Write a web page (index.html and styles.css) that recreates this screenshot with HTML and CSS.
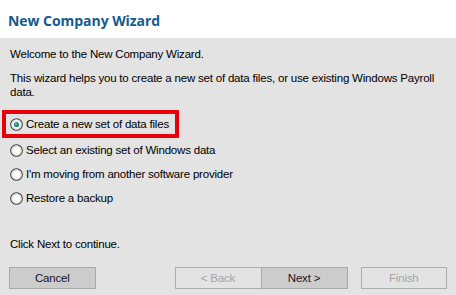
FILE: index.html
```html
<!DOCTYPE html>
<html>
<head>
<meta charset="utf-8">
<link rel="stylesheet" href="styles.css">
</head>
<body>
<div class="wizard">
  <header class="header">
    <h1 class="title">New Company Wizard</h1>
  </header>
  <main class="content">
    <p class="text welcome">Welcome to the New Company Wizard.</p>
    <p class="text intro">This wizard helps you to create a new set of data files, or use existing Windows Payroll data.</p>
    <div class="options">
      <label class="option highlighted">
        <svg class="radio" width="13" height="13" viewBox="0 0 13 13"><circle cx="6.5" cy="6.5" r="5.8" fill="#f4f4f4" stroke="#3c3c3c" stroke-width="1.1"/><circle cx="6.5" cy="6.5" r="4.6" fill="#ffffff" stroke="#cfcfcf" stroke-width="0.8"/><circle cx="6.5" cy="6.5" r="2.6" fill="#1f8a6e"/><circle cx="6" cy="6" r="1" fill="#7fd0b4"/></svg>
        <span>Create a new set of data files</span>
      </label>
      <label class="option">
        <svg class="radio" width="13" height="13" viewBox="0 0 13 13"><circle cx="6.5" cy="6.5" r="5.8" fill="#f4f4f4" stroke="#3c3c3c" stroke-width="1.1"/><circle cx="6.5" cy="6.5" r="4.6" fill="#ffffff" stroke="#cfcfcf" stroke-width="0.8"/></svg>
        <span>Select an existing set of Windows data</span>
      </label>
      <label class="option">
        <svg class="radio" width="13" height="13" viewBox="0 0 13 13"><circle cx="6.5" cy="6.5" r="5.8" fill="#f4f4f4" stroke="#3c3c3c" stroke-width="1.1"/><circle cx="6.5" cy="6.5" r="4.6" fill="#ffffff" stroke="#cfcfcf" stroke-width="0.8"/></svg>
        <span>I'm moving from another software provider</span>
      </label>
      <label class="option">
        <svg class="radio" width="13" height="13" viewBox="0 0 13 13"><circle cx="6.5" cy="6.5" r="5.8" fill="#f4f4f4" stroke="#3c3c3c" stroke-width="1.1"/><circle cx="6.5" cy="6.5" r="4.6" fill="#ffffff" stroke="#cfcfcf" stroke-width="0.8"/></svg>
        <span>Restore a backup</span>
      </label>
    </div>
    <p class="text continue">Click Next to continue.</p>
  </main>
  <footer class="buttons">
    <button class="btn btn-active">Cancel</button>
    <div class="nav">
      <button class="btn btn-disabled">&lt; Back</button>
      <button class="btn btn-active btn-next">Next &gt;</button>
    </div>
    <button class="btn btn-disabled">Finish</button>
  </footer>
</div>
</body>
</html>
```
FILE: styles.css
```css
* { box-sizing: border-box; }
html, body {
  margin: 0;
  padding: 0;
}
body {
  width: 456px;
  height: 295px;
  background: #e3e3e3;
  font-family: "Liberation Sans", Arial, sans-serif;
  overflow: hidden;
}
.wizard {
  display: flex;
  flex-direction: column;
  height: 295px;
}
.header {
  height: 38px;
  background: #ffffff;
  padding: 11px 0 0 8px;
}
.title {
  margin: 0;
  font-family: "Open Sans", "Noto Sans", sans-serif;
  font-weight: 700;
  font-size: 14px;
  line-height: 20px;
  color: #155b8e;
  letter-spacing: -0.05px;
}
.content {
  padding: 9px 10px 0 10px;
}
.text {
  margin: 0;
  font-size: 11.5px;
  line-height: 14px;
  color: #000;
  letter-spacing: -0.2px;
}
.intro {
  margin-top: 10px;
  width: 436px;
}
.options {
  margin-top: 15px;
  display: flex;
  flex-direction: column;
}
.option {
  display: flex;
  align-items: center;
  gap: 3px;
  height: 24px;
  font-size: 11.5px;
  letter-spacing: -0.2px;
  color: #000;
}
.highlighted {
  align-self: flex-start;
  outline: 4px solid #e5000b;
  outline-offset: 0;
  margin-left: -4px;
  padding-left: 4px;
  padding-right: 6px;
  height: 20px;
  margin-bottom: 4px;
  box-shadow: 5px 5px 0 -1px #bdbdbd;
}
.radio {
  flex: none;
}
.continue {
  margin-top: 27px;
}
.buttons {
  margin-top: 16px;
  display: flex;
  align-items: center;
  padding: 0 9px;
}
.nav {
  display: flex;
  margin-left: 79px;
  margin-right: 13px;
}
.btn {
  width: 87px;
  height: 22px;
  font-family: "Liberation Sans", Arial, sans-serif;
  font-size: 11.5px;
  letter-spacing: -0.2px;
  border: 1px solid #a9a9a9;
  padding: 0;
  background: #e3e3e3;
  color: #000;
}
.btn-active {
  background: #cccccc;
  color: #141428;
}
.btn-disabled {
  color: #a3a3a8;
  border-color: #adadad;
}
.btn-next {
  margin-left: -1px;
}
```
